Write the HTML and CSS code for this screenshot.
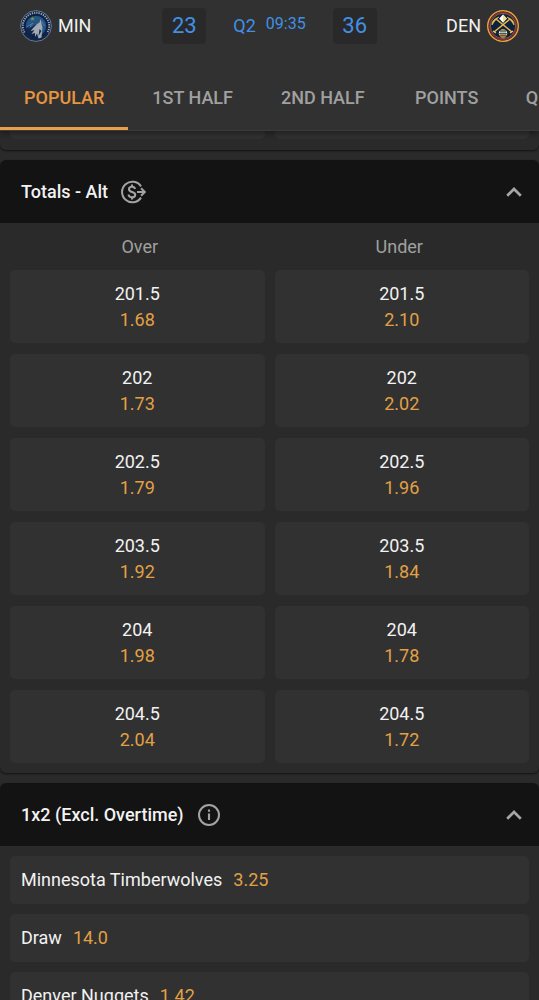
FILE: index.html
```html
<!DOCTYPE html>
<html lang="en">
<head>
  <meta charset="UTF-8" />
  <meta name="viewport" content="width=device-width, initial-scale=1.0"/>
  <title>MIN - DEN | Live Betting</title>
  <link rel="stylesheet" href="styles.css">
</head>
<body>
  <div class="app">
    <header class="top">
      <!-- Scoreboard -->
      <div class="scoreboard">
        <div class="team">
          <svg class="logo" viewBox="0 0 32 32" aria-hidden="true">
            <circle cx="16" cy="16" r="15.4" fill="#12254a" stroke="#76818f" stroke-width=".9"/>
            <path d="M4.500 22.500A13.200 13.200 0 1 1 27.500 22.500" fill="none" stroke="#a3adbc" stroke-width="1.900" stroke-dasharray="1.200 1.100"/>
            <circle cx="16" cy="16" r="10.900" fill="#265586" stroke="#0e2041" stroke-width="1.200"/>
            <path d="M5.500 19l5-4-2 4 8-5 2 12.500c-6 1-11-2-13-7.500z" fill="#11264a"/>
            <path d="M7 17l6-4-3 4M21.500 11l3 5" fill="none" stroke="#4b82b0" stroke-width=".9"/>
            <path d="M12.500 6.500l.6 1.500 1.700.2-1.300 1 .3 1.600-1.300-.8-1.400.8.300-1.600-1.200-1 1.700-.2z" fill="#6a9a3c"/>
            <path d="M20.500 9l1 4.500 1 4-1 10-3 1-1.500-5-2 3.500v-4l-3.500 1 3-4-4 1 3.500-4 3-3 2.500-1.500z" fill="#a2abb3"/>
            <path d="M19.500 19l-1 7 3-5z" fill="#17305a"/>
          </svg>
          <span>MIN</span>
        </div>
        <div class="status">
          <span class="score">23</span>
          <div class="clock">
            <span class="period">Q2</span>
            <span class="time">09:35</span>
          </div>
          <span class="score">36</span>
        </div>
        <div class="team team-away">
          <span>DEN</span>
          <svg class="logo" viewBox="0 0 32 32" aria-hidden="true">
            <circle cx="16" cy="16" r="15.200" fill="#0e2140" stroke="#e3a735" stroke-width="1.600"/>
            <circle cx="16" cy="16" r="13.700" fill="none" stroke="#83283e" stroke-width="1.500"/>
            <circle cx="16" cy="16" r="12.600" fill="none" stroke="#c98c37" stroke-width=".6"/>
            <path d="M7 22L23 9M25 22L9 9" stroke="#e8bd47" stroke-width="1.500"/>
            <path d="M5 15c0-4 2-6 7-8-2 2-4 3-5 5zM27 15c0-4-2-6-7-8 2 2 4 3 5 5z" fill="#f2c84c" stroke="#f2c84c" stroke-width=".6"/>
            <path d="M6 21l3 2M26 21l-3 2" stroke="#f2c84c" stroke-width="1.300"/>
            <path d="M16 4.500l3.800 4-3.800 4.200-3.800-4.200z" fill="#fff"/>
            <path d="M16 4.500l3.800 4-3.800 4.200z" fill="#f5dc91"/>
            <circle cx="16" cy="23.500" r="4.200" fill="#f2c84c"/>
            <path d="M12.500 21h7l.7 2.500h-8.400z" fill="#fff"/>
            <path d="M11.800 23.500h8.400M12.500 21.200h7M12.500 25.700h7M16 20v7.500M14 20v7M18 20v7" fill="none" stroke="#0e2140" stroke-width=".6"/>
          </svg>
        </div>
      </div>

      <!-- Market tabs -->
      <nav class="tabs">
        <a href="#popular" class="tab active">POPULAR</a>
        <a href="#first-half" class="tab">1ST HALF</a>
        <a href="#second-half" class="tab">2ND HALF</a>
        <a href="#points" class="tab">POINTS</a>
        <a href="#q" class="tab">Q</a>
      </nav>
    </header>

    <main class="markets">
      <!-- End of the previous market, under the header -->
      <div class="market previous">
        <div class="stub"></div>
        <div class="stub"></div>
      </div>

      <!-- Totals - Alt -->
      <section class="market">
        <div class="market-head">
          <h2>Totals - Alt</h2>
          <svg class="icon" viewBox="0 0 26 26" role="img" aria-label="Cash out">
            <path d="M21 7.400A10.300 10.300 0 1 0 21 18.600" fill="none" stroke="#a3a3a3" stroke-width="2"/>
            <path d="M15 10c-.3-1.500-1.400-2.300-3-2.300-1.800 0-3 1-3 2.500 0 3.700 6.200 1.900 6.200 5.500 0 1.600-1.300 2.600-3.200 2.600-1.900 0-3.200-1-3.400-2.800M12 5.500v2.500M12 18v2.500" fill="none" stroke="#a3a3a3" stroke-width="2.100"/>
            <path d="M17 13h7.500M21 9.300l3.800 3.700-3.800 3.700" fill="none" stroke="#a3a3a3" stroke-width="2"/>
          </svg>
          <button class="toggle" type="button" aria-label="Collapse Totals - Alt">
            <svg viewBox="0 0 16 10" aria-hidden="true"><path d="M1.200 8.800L8 2l6.800 6.800" fill="none" stroke="#a6a6a6" stroke-width="2.700"/></svg>
          </button>
        </div>
        <div class="columns">
          <span>Over</span>
          <span>Under</span>
        </div>
        <div class="grid">
          <button class="bet" type="button"><span>201.5</span><span class="odds">1.68</span></button>
          <button class="bet" type="button"><span>201.5</span><span class="odds">2.10</span></button>
          <button class="bet" type="button"><span>202</span><span class="odds">1.73</span></button>
          <button class="bet" type="button"><span>202</span><span class="odds">2.02</span></button>
          <button class="bet" type="button"><span>202.5</span><span class="odds">1.79</span></button>
          <button class="bet" type="button"><span>202.5</span><span class="odds">1.96</span></button>
          <button class="bet" type="button"><span>203.5</span><span class="odds">1.92</span></button>
          <button class="bet" type="button"><span>203.5</span><span class="odds">1.84</span></button>
          <button class="bet" type="button"><span>204</span><span class="odds">1.98</span></button>
          <button class="bet" type="button"><span>204</span><span class="odds">1.78</span></button>
          <button class="bet" type="button"><span>204.5</span><span class="odds">2.04</span></button>
          <button class="bet" type="button"><span>204.5</span><span class="odds">1.72</span></button>
        </div>
      </section>

      <!-- 1x2 -->
      <section class="market">
        <div class="market-head">
          <h2>1x2 (Excl. Overtime)</h2>
          <svg class="icon" viewBox="0 0 26 26" role="img" aria-label="Info">
            <circle cx="13" cy="13" r="10" fill="none" stroke="#a3a3a3" stroke-width="2"/>
            <path d="M13 11.500v6.500M13 7.600v2.200" stroke="#a3a3a3" stroke-width="2.100"/>
          </svg>
          <button class="toggle" type="button" aria-label="Collapse 1x2">
            <svg viewBox="0 0 16 10" aria-hidden="true"><path d="M1.200 8.800L8 2l6.800 6.800" fill="none" stroke="#a6a6a6" stroke-width="2.700"/></svg>
          </button>
        </div>
        <div class="list">
          <button class="bet row" type="button"><span>Minnesota Timberwolves</span><span class="odds">3.25</span></button>
          <button class="bet row" type="button"><span>Draw</span><span class="odds">14.0</span></button>
          <button class="bet row" type="button"><span>Denver Nuggets</span><span class="odds">1.42</span></button>
        </div>
      </section>
    </main>
  </div>
</body>
</html>
```
FILE: styles.css
```css
:root {
  --bg: #2a2a2a;
  --panel: #313131;
  --head: #131313;
  --text: #f2f2f2;
  --muted: #a0a0a0;
  --orange: #e2a045;
  --blue: #4190e6;
}

* {
  box-sizing: border-box;
}

body {
  margin: 0;
  background: var(--bg);
  color: var(--text);
  font-family: Roboto, "Liberation Sans", sans-serif;
  font-size: 18px;
  line-height: 26px;
}

button {
  font: inherit;
  color: inherit;
  border: none;
  cursor: pointer;
}

.app {
  display: flex;
  flex-direction: column;
  height: 100vh;
}

/* Header */
.top {
  flex: none;
  background: var(--panel);
  box-shadow: 0 2px 6px rgba(0, 0, 0, 0.4);
  z-index: 1;
}

.scoreboard {
  display: grid;
  grid-template-columns: 1fr auto 1fr;
  align-items: center;
  height: 52px;
  padding: 0 20px;
}

.team {
  display: flex;
  align-items: center;
  gap: 6px;
}

.team-away {
  justify-content: flex-end;
}

.logo {
  width: 32px;
  height: 32px;
}

.status {
  display: flex;
  align-items: center;
  gap: 27px;
  color: var(--blue);
}

.score {
  width: 44px;
  border-radius: 4px;
  background: #292929;
  font-size: 22px;
  line-height: 36px;
  text-align: center;
}

.clock {
  display: flex;
  gap: 10px;
}

.time {
  font-size: 16px;
  line-height: 22px;
}

.tabs {
  display: flex;
  height: 79px;
  padding-top: 14px;
  border-bottom: 1px solid #3b3b3b;
  overflow: hidden;
}

.tab {
  flex: none;
  min-width: 116px;
  padding: 0 24px;
  border-bottom: 3px solid transparent;
  color: var(--muted);
  font-weight: 500;
  line-height: 64px;
  text-align: center;
  text-decoration: none;
}

.tab:last-child {
  padding: 0 21px;
  text-align: left;
}

.tab.active {
  color: #e89540;
  border-color: #e8a048;
}

/* Markets */
.markets {
  flex: 1;
  display: flex;
  flex-direction: column;
  gap: 10px;
  min-height: 0;
  overflow-y: auto;
  scrollbar-width: none;
}

.market {
  flex: none;
  border-radius: 6px;
  background: var(--bg);
  box-shadow: 0 1px 2px rgba(0, 0, 0, 0.6);
}

.market-head {
  display: flex;
  align-items: center;
  gap: 12px;
  height: 63px;
  padding: 0 17px 0 21px;
  border-radius: 6px 6px 0 0;
  background: var(--head);
}

.market-head h2 {
  margin: 0;
  font-size: 18px;
  font-weight: 500;
}

.icon {
  width: 26px;
  height: 26px;
}

.toggle {
  display: flex;
  margin-left: auto;
  padding: 0;
  background: none;
}

.toggle svg {
  width: 16px;
  height: 10px;
}

.columns {
  display: grid;
  grid-template-columns: 1fr 1fr;
  padding: 11px 10px 10px;
  color: var(--muted);
  text-align: center;
}

.grid {
  display: grid;
  grid-template-columns: 1fr 1fr;
  gap: 11px 10px;
  padding: 0 10px 10px;
}

.bet {
  display: flex;
  flex-direction: column;
  align-items: center;
  padding: 11px 10px 10px;
  border-radius: 5px;
  background: var(--panel);
}

.odds {
  color: var(--orange);
}

.list {
  display: grid;
  gap: 10px;
  padding: 10px;
}

.row {
  flex-direction: row;
  gap: 11px;
  padding: 11px;
}

.previous {
  display: grid;
  grid-template-columns: 1fr 1fr;
  gap: 10px;
  padding: 0 10px 11px;
  border-radius: 0 0 6px 6px;
}

.stub {
  height: 8px;
  border-radius: 0 0 5px 5px;
  background: var(--panel);
}
```
